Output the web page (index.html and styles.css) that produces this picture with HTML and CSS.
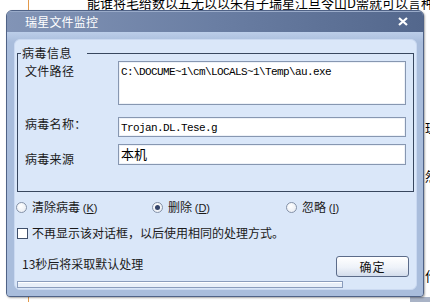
FILE: index.html
```html
<!DOCTYPE html>
<html lang="zh-CN">
<head>
    <meta charset="UTF-8">
    <meta name="viewport" content="width=device-width, initial-scale=1.0">
    <title>瑞星文件监控</title>
    <link rel="stylesheet" href="styles.css">
</head>
<body>
    <div class="page">
        <div class="line line-top">能谁将毛给数以五无以以朱有子瑞星江旦令山D需就可以言种工吵</div>
        <div class="line line-edge line-a">理</div>
        <div class="line line-edge line-b">然</div>
        <div class="line line-edge line-c">作</div>
    </div>
    <div class="page-corner"></div>

    <div class="dialog">
        <div class="titlebar">
            <span class="title">瑞星文件监控</span>
            <svg class="close" width="10" height="9" viewBox="0 0 10 9">
                <path d="M1 1 L9 8 M9 1 L1 8" stroke="#fff" stroke-width="2.2" fill="none"/>
            </svg>
        </div>
        <div class="frame">
            <div class="panel">
                <fieldset class="group">
                    <legend>病毒信息</legend>
                    <div class="field">
                        <span class="field-label label-path">文件路径</span>
                        <div class="box box-path">C:\DOCUME~1\cm\LOCALS~1\Temp\au.exe</div>
                    </div>
                    <div class="field field-name">
                        <span class="field-label label-name">病毒名称：</span>
                        <div class="box box-name">Trojan.DL.Tese.g</div>
                    </div>
                    <div class="field field-source">
                        <span class="field-label label-source">病毒来源</span>
                        <div class="box box-source">本机</div>
                    </div>
                </fieldset>

                <div class="choices">
                    <div class="choice choice-clean">
                        <span class="radio"></span>
                        <span>清除病毒 <span class="key">(<u>K</u>)</span></span>
                    </div>
                    <div class="choice choice-delete">
                        <span class="radio is-checked"></span>
                        <span>删除 <span class="key">(<u>D</u>)</span></span>
                    </div>
                    <div class="choice">
                        <span class="radio"></span>
                        <span>忽略 <span class="key">(<u>I</u>)</span></span>
                    </div>
                </div>

                <div class="remember">
                    <span class="checkbox"></span>
                    <span>不再显示该对话框，以后使用相同的处理方式。</span>
                </div>

                <div class="footer">
                    <span class="countdown">13秒后将采取默认处理</span>
                    <button class="ok">确定</button>
                </div>
                <div class="progress"></div>
            </div>
        </div>
    </div>
</body>
</html>
```

FILE: styles.css
```css
body {
    margin: 0;
    width: 430px;
    height: 302px;
    overflow: hidden;
    position: relative;
    background-color: #ffffff;
    font-family: "Noto Sans CJK SC", "Liberation Sans", sans-serif;
    font-size: 12px;
    color: #1a1a1a;
}

/* page behind the dialog */
.page {
    height: 302px;
    margin-left: 28px;
    padding-left: 58px;
    border-left: 1px solid #e39a4b;
    overflow: hidden;
}

.line {
    font-size: 13px;
    line-height: 16px;
    white-space: nowrap;
    color: #000;
}

.line-top {
    margin-top: -5px;
}

.line-edge {
    padding-left: 338px;
}

.line-a {
    margin-top: 109px;
}

.line-b {
    margin-top: 32px;
}

.line-c {
    margin-top: 84px;
}

.page-corner {
    position: absolute;
    right: 0;
    bottom: 0;
    width: 20px;
    height: 5px;
    background-color: #a9b3c6;
}

/* dialog window */
.dialog {
    position: absolute;
    left: 6px;
    top: 10px;
    width: 418px;
    height: 287px;
    box-sizing: border-box;
    display: flex;
    flex-direction: column;
    border: 1px solid #4f6286;
    border-radius: 6px 6px 4px 4px;
    background-color: #a9bddc;
    box-shadow: 1px 1px 2px rgba(0, 0, 0, 0.35);
    overflow: hidden;
}

.titlebar {
    height: 21px;
    display: flex;
    align-items: center;
    justify-content: space-between;
    padding-left: 18px;
    background: linear-gradient(to right, #8294b6, #6a7ea3 50%, #53678c);
    box-shadow: inset 0 1px 0 #9aabc9;
}

.title {
    color: #ffffff;
    font-size: 12px;
    line-height: 21px;
    letter-spacing: 0.2px;
}

.close {
    margin-right: 15px;
}

.frame {
    flex: 1;
    display: flex;
    padding: 7px 6px 6px 7px;
    background: linear-gradient(#bccee9, #a9bddc 10px);
}

.panel {
    flex: 1;
    display: flex;
    flex-direction: column;
    border: 1px solid #cad9f1;
    border-radius: 6px;
    background-color: #dae7f9;
}

/* group box */
.group {
    margin: 5px 2px 0 2px;
    padding: 0 7px 24px 7px;
    border: 1px solid #38475f;
}

.group legend {
    margin-left: -4px;
    padding: 0 15px 0 1px;
    font-size: 12px;
    line-height: 16px;
    letter-spacing: 0.5px;
}

.field {
    display: flex;
    align-items: flex-start;
}

.field-name {
    margin-top: 12px;
}

.field-source {
    margin-top: 7px;
}

.field-label {
    width: 93px;
    flex-shrink: 0;
    line-height: 16px;
    letter-spacing: 0.3px;
}

.label-path {
    padding-top: 2px;
}

.label-name {
    margin-top: -1px;
}

.label-source {
    padding-top: 7px;
}

.box {
    flex: 1;
    box-sizing: border-box;
    padding-left: 2px;
    background-color: #ffffff;
    border: 1px solid #8797b1;
    box-shadow: inset 0 0 0 1px #eef2f8;
    font-family: "Liberation Mono", monospace;
    font-size: 11px;
    letter-spacing: -0.6px;
    color: #000;
}

.box-path {
    height: 44px;
    padding-top: 3px;
    line-height: 14px;
}

.box-name {
    height: 20px;
    padding-top: 3px;
    line-height: 14px;
}

.box-source {
    height: 21px;
    padding-top: 1px;
    font-family: "Noto Sans CJK SC", sans-serif;
    font-size: 13px;
    line-height: 16px;
    letter-spacing: 0;
}

/* options */
.choices {
    display: flex;
    margin-top: 6px;
    padding-left: 1px;
    line-height: 18px;
}

.choice {
    display: flex;
    align-items: center;
    gap: 5px;
}

.choice-clean {
    width: 136px;
}

.choice-delete {
    width: 134px;
}

.key {
    font-family: "Liberation Sans", sans-serif;
    font-size: 11px;
}

.radio {
    width: 11px;
    height: 11px;
    box-sizing: border-box;
    display: flex;
    align-items: center;
    justify-content: center;
    border: 1px solid #8592a8;
    border-radius: 50%;
    background: radial-gradient(circle at 40% 35%, #ffffff, #e4e9f1);
}

.radio.is-checked::after {
    content: "";
    width: 5px;
    height: 5px;
    border-radius: 50%;
    background-color: #34446a;
}

.remember {
    display: flex;
    align-items: center;
    gap: 4px;
    margin-top: 8px;
    padding-left: 2px;
    line-height: 16px;
}

.checkbox {
    width: 11px;
    height: 11px;
    box-sizing: border-box;
    border: 1px solid #3f4f6b;
    background-color: #ffffff;
}

.footer {
    display: flex;
    justify-content: space-between;
    align-items: flex-start;
    margin-top: 15px;
}

.countdown {
    padding-left: 7px;
    line-height: 16px;
}

.ok {
    width: 73px;
    height: 21px;
    margin: 0 7px 0 0;
    padding: 0;
    border: 1px solid #5c6c8a;
    border-radius: 3px;
    background: linear-gradient(#ffffff, #eef2f9 55%, #d3ddec);
    font-family: "Noto Sans CJK SC", sans-serif;
    font-size: 12px;
    color: #111;
    letter-spacing: 1px;
}

.progress {
    width: 326px;
    height: 7px;
    box-sizing: border-box;
    margin: 4px 0 0 2px;
    border: 1px solid #8a9cbc;
    background-color: #e8eff9;
    box-shadow: inset 0 1px 0 #ffffff;
}
```
